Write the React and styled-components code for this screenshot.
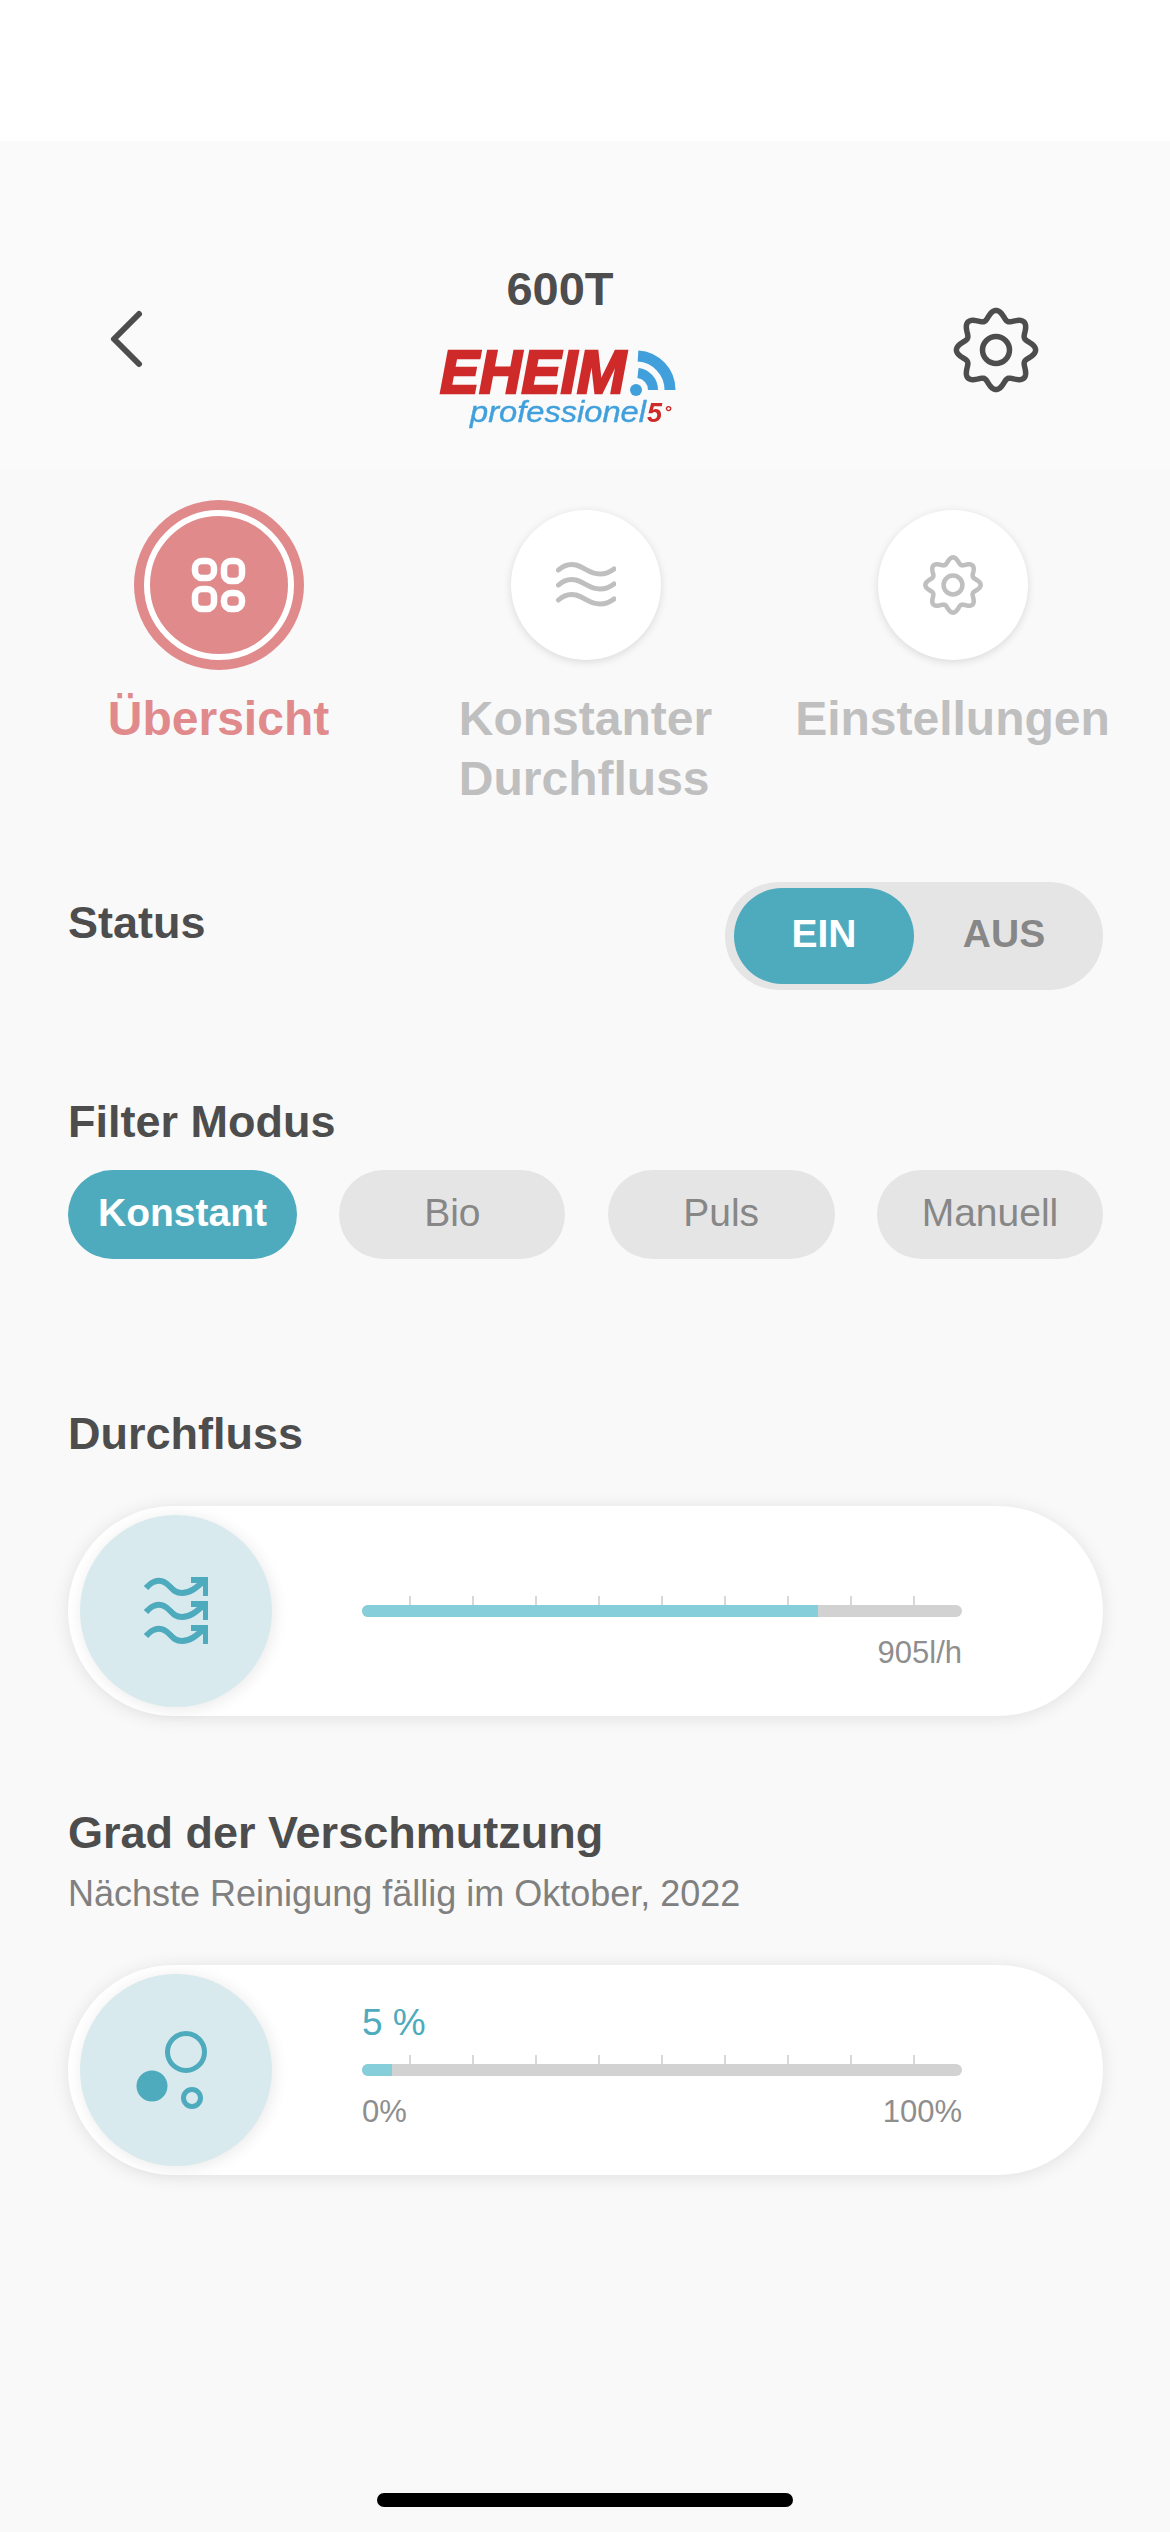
import React from "react";
import styled, { createGlobalStyle } from "styled-components";

const GlobalStyle = createGlobalStyle`
  html, body {
    margin: 0;
    padding: 0;
    background: #f9f9f9;
  }
  * {
    box-sizing: border-box;
  }
`;

const TEAL = "#4eaabd";
const PINK = "#e08a8c";
const MUTED = "#bfbfbf";

// wavy 8 tooth outline, sampled round the circle
const gearPath = () => {
  const pts = [];
  for (let i = 0; i < 240; i++) {
    const a = (i / 240) * Math.PI * 2;
    const r = 35.2 + 4.4 * Math.cos(8 * a);
    const x = r * Math.sin(a);
    const y = -r * Math.cos(a);
    pts.push(`${x.toFixed(2)} ${y.toFixed(2)}`);
  }
  return `M${pts.join("L")}Z`;
};

function Gear({ size, color, stroke }) {
  return (
    <svg width={size} height={size} viewBox="-43 -43 86 86" fill="none" stroke={color} strokeWidth={stroke}>
      <path d={gearPath()} strokeLinejoin="round" />
      <circle r="13.5" />
    </svg>
  );
}

function Chevron() {
  return (
    <svg width="36" height="60" viewBox="0 0 36 60" fill="none" stroke="#4d4d4d" strokeWidth="6" strokeLinecap="round" strokeLinejoin="round">
      <path d="M31 5 L6 30 L31 55" />
    </svg>
  );
}

function Logo() {
  return (
    <LogoSvg width="244" height="86" viewBox="0 0 244 86">
      <text x="2" y="48" fontSize="62" fontWeight="700" fontStyle="italic" fill="#cf2a2a" stroke="#cf2a2a" strokeWidth="2.6" textLength="186" lengthAdjust="spacingAndGlyphs">
        EHEIM
      </text>
      <circle cx="198" cy="45" r="6" fill="#41a0dc" />
      <g fill="none" stroke="#41a0dc">
        <path d="M200 11 A34 34 0 0 1 232 45" strokeWidth="11" />
        <path d="M200 28 A17 17 0 0 1 215 45" strokeWidth="10" />
      </g>
      <text x="32" y="77" fontSize="29" fontStyle="italic" fill="#41a0dc" stroke="#41a0dc" strokeWidth="0.4" textLength="176" lengthAdjust="spacingAndGlyphs">
        professionel
      </text>
      <text x="209" y="77" fontSize="27" fontWeight="700" fontStyle="italic" fill="#cf2a2a">
        5
      </text>
      <text x="227" y="73" fontSize="18" fontWeight="700" fill="#cf2a2a">
        °
      </text>
    </LogoSvg>
  );
}

function GridIcon() {
  return (
    <svg width="56" height="56" viewBox="0 0 56 56" fill="none" stroke="#fff" strokeWidth="6.5">
      <rect x="4" y="4" width="19" height="17" rx="7" />
      <rect x="33" y="4" width="18" height="20" rx="7" />
      <rect x="4" y="32" width="19" height="20" rx="7" />
      <rect x="33" y="36" width="18" height="16" rx="7" />
    </svg>
  );
}

function WavesIcon() {
  const wave = "C8 5 14 3.5 20 5 C30 8 33 14 44 14 C50 14 54 12 58 9";
  return (
    <svg width="60" height="50" viewBox="0 0 60 50" fill="none" stroke={MUTED} strokeWidth="5" strokeLinecap="round">
      <path d={`M2.5 10 ${wave}`} />
      <path transform="translate(0 15)" d={`M2.5 10 ${wave}`} />
      <path transform="translate(0 30)" d={`M2.5 10 ${wave}`} />
    </svg>
  );
}

function FlowIcon() {
  const line = "M2 11 C7 5 14 2 20 5 C27 8 28 16 38 16 C46 16 52 11 60 4 M47 3 H62 V19";
  return (
    <svg width="64" height="68" viewBox="0 0 64 68" fill="none" stroke={TEAL} strokeWidth="6">
      <path d={line} />
      <path transform="translate(0 24)" d={line} />
      <path transform="translate(0 48)" d={line} />
    </svg>
  );
}

function BubblesIcon() {
  return (
    <svg width="84" height="84" viewBox="0 0 84 84" fill="none" stroke={TEAL}>
      <circle cx="52" cy="24" r="18.5" strokeWidth="5" />
      <circle cx="18" cy="58" r="15.5" fill={TEAL} stroke="none" />
      <circle cx="58" cy="70" r="8.5" strokeWidth="5" />
    </svg>
  );
}

const TICKS = [0, 1, 2, 3, 4, 5, 6, 7, 8];

function Slider({ value, fill, left, right }) {
  return (
    <SliderBlock>
      <ValueSlot>{value && <Value>{value}</Value>}</ValueSlot>
      <Ticks>
        {TICKS.map((t) => (
          <Tick key={t} />
        ))}
      </Ticks>
      <Track>
        <Fill style={{ width: `${fill}%` }} />
      </Track>
      <Scale>
        <span>{left}</span>
        <span>{right}</span>
      </Scale>
    </SliderBlock>
  );
}

export default function App() {
  return (
    <Page>
      <GlobalStyle />
      <StatusBar />
      <Header>
        <BackSlot>
          <Chevron />
        </BackSlot>
        <Brand>
          <Title>600T</Title>
          <Logo />
        </Brand>
        <SettingsSlot>
          <Gear size={86} color="#4d4d4d" stroke={5.5} />
        </SettingsSlot>
      </Header>

      <Tabs>
        <Tab>
          <TabCircle $active>
            <GridIcon />
          </TabCircle>
          <TabLabel $active>Übersicht</TabLabel>
        </Tab>
        <Tab>
          <TabCircle>
            <WavesIcon />
          </TabCircle>
          <TabLabel>
            Konstanter
            <br />
            Durchfluss
          </TabLabel>
        </Tab>
        <Tab>
          <TabCircle>
            <Gear size={60} color={MUTED} stroke={6.5} />
          </TabCircle>
          <TabLabel>Einstellungen</TabLabel>
        </Tab>
      </Tabs>

      <Content>
        <StatusRow>
          <StatusLabel>Status</StatusLabel>
          <Toggle>
            <ToggleThumb>EIN</ToggleThumb>
            <ToggleOff>AUS</ToggleOff>
          </Toggle>
        </StatusRow>

        <FilterTitle>Filter Modus</FilterTitle>
        <Chips>
          <Chip $active>Konstant</Chip>
          <Chip>Bio</Chip>
          <Chip>Puls</Chip>
          <Chip>Manuell</Chip>
        </Chips>

        <FlowTitle>Durchfluss</FlowTitle>
        <Card>
          <Knob>
            <FlowIcon />
          </Knob>
          <Slider fill={76} right="905l/h" />
        </Card>

        <DirtTitle>Grad der Verschmutzung</DirtTitle>
        <Subtitle>Nächste Reinigung fällig im Oktober, 2022</Subtitle>
        <Card>
          <Knob>
            <BubblesIcon />
          </Knob>
          <Slider value="5 %" fill={5} left="0%" right="100%" />
        </Card>
      </Content>

      <HomeBar />
    </Page>
  );
}

const Page = styled.div`
  width: 1170px;
  height: 2532px;
  display: flex;
  flex-direction: column;
  background: #f9f9f9;
  font-family: "Liberation Sans", Arial, sans-serif;
  color: #4d4d4d;
  overflow: hidden;
`;

const StatusBar = styled.div`
  flex: none;
  height: 141px;
  background: #fff;
`;

const Header = styled.header`
  flex: none;
  height: 329px;
  padding-top: 120px;
  display: grid;
  grid-template-columns: 438px 244px 1fr;
  background: #fafafa;
`;

const BackSlot = styled.div`
  padding: 48px 0 0 108px;
`;

const Brand = styled.div`
  display: flex;
  flex-direction: column;
  align-items: flex-start;
`;

const Title = styled.h1`
  width: 244px;
  margin: 0 0 28px;
  font-size: 47px;
  line-height: 56px;
  font-weight: 700;
  text-align: center;
`;

const LogoSvg = styled.svg`
  display: block;
  overflow: visible;
  font-family: "Liberation Sans", Arial, sans-serif;
  filter: blur(0.5px);
`;

const SettingsSlot = styled.div`
  padding: 46px 0 0 271px;
`;

const Tabs = styled.nav`
  flex: none;
  display: grid;
  grid-template-columns: repeat(3, 367px);
  padding: 40px 0 0 35px;
`;

const Tab = styled.div`
  display: flex;
  flex-direction: column;
  align-items: center;
`;

const TabCircle = styled.div`
  width: 150px;
  height: 150px;
  border-radius: 50%;
  display: flex;
  align-items: center;
  justify-content: center;
  background: ${(p) => (p.$active ? PINK : "#fff")};
  border: ${(p) => (p.$active ? "6px solid #fff" : "none")};
  box-shadow: ${(p) => (p.$active ? `0 0 0 10px ${PINK}` : "0 2px 9px rgba(0, 0, 0, 0.13)")};
`;

const TabLabel = styled.div`
  margin-top: 29px;
  font-size: 48px;
  line-height: 60px;
  font-weight: 700;
  white-space: nowrap;
  color: ${(p) => (p.$active ? PINK : MUTED)};
`;

const Content = styled.main`
  padding: 0 67px 0 68px;
`;

const StatusRow = styled.div`
  display: flex;
  justify-content: space-between;
  align-items: flex-start;
  margin-top: 73px;
`;

const SectionTitle = styled.h2`
  margin: 0;
  font-size: 45px;
  line-height: 50px;
  font-weight: 700;
`;

const StatusLabel = styled(SectionTitle)`
  margin-top: 16px;
`;

const FilterTitle = styled(SectionTitle)`
  margin-top: 107px;
`;

const FlowTitle = styled(SectionTitle)`
  margin: 150px 0 47px;
`;

const DirtTitle = styled(SectionTitle)`
  margin-top: 92px;
`;

const Subtitle = styled.p`
  margin: 16px 0 51px;
  font-size: 36px;
  line-height: 40px;
  color: #808080;
`;

const Toggle = styled.div`
  width: 378px;
  height: 108px;
  padding: 6px 9px;
  border-radius: 54px;
  background: #e5e5e5;
  display: grid;
  grid-template-columns: 180px 1fr;
  align-items: center;
  font-size: 39px;
  font-weight: 700;
  text-align: center;
`;

const ToggleThumb = styled.div`
  height: 96px;
  line-height: 92px;
  border-radius: 48px;
  background: ${TEAL};
  color: #fff;
`;

const ToggleOff = styled.div`
  color: #878787;
  line-height: 92px;
  padding-bottom: 4px;
`;

const Chips = styled.div`
  margin-top: 23px;
  display: grid;
  grid-template-columns: 229px 226px 227px 226px;
  justify-content: space-between;
`;

const Chip = styled.div`
  height: 89px;
  line-height: 86px;
  border-radius: 44.5px;
  text-align: center;
  font-size: 39px;
  font-weight: ${(p) => (p.$active ? 700 : 400)};
  background: ${(p) => (p.$active ? TEAL : "#e5e5e5")};
  color: ${(p) => (p.$active ? "#fff" : "#878787")};
`;

const Card = styled.section`
  height: 210px;
  padding: 9px 12px;
  border-radius: 105px;
  background: #fff;
  display: flex;
  box-shadow: 0 2px 18px rgba(0, 0, 0, 0.1);
`;

const Knob = styled.div`
  flex: none;
  width: 192px;
  height: 192px;
  border-radius: 50%;
  background: #d8eaed;
  display: flex;
  align-items: center;
  justify-content: center;
  box-shadow: 2px 2px 16px rgba(0, 0, 0, 0.09);
`;

const SliderBlock = styled.div`
  width: 600px;
  margin-left: 90px;
`;

const ValueSlot = styled.div`
  height: 81px;
  padding-bottom: 12px;
  display: flex;
  align-items: flex-end;
`;

const Value = styled.div`
  font-size: 37px;
  line-height: 40px;
  color: ${TEAL};
`;

const Ticks = styled.div`
  height: 9px;
  padding-left: 47px;
  display: flex;
  gap: 61px;
`;

const Tick = styled.div`
  width: 2px;
  background: #d8d8d8;
`;

const Track = styled.div`
  height: 12px;
  border-radius: 6px;
  background: #d2d2d2;
  overflow: hidden;
`;

const Fill = styled.div`
  height: 100%;
  background: #86cfda;
`;

const Scale = styled.div`
  margin-top: 19px;
  display: flex;
  justify-content: space-between;
  font-size: 31px;
  line-height: 34px;
  color: #8e8e8e;
`;

const HomeBar = styled.div`
  flex: none;
  width: 416px;
  height: 14px;
  margin: auto auto 25px;
  border-radius: 7px;
  background: #000;
`;
